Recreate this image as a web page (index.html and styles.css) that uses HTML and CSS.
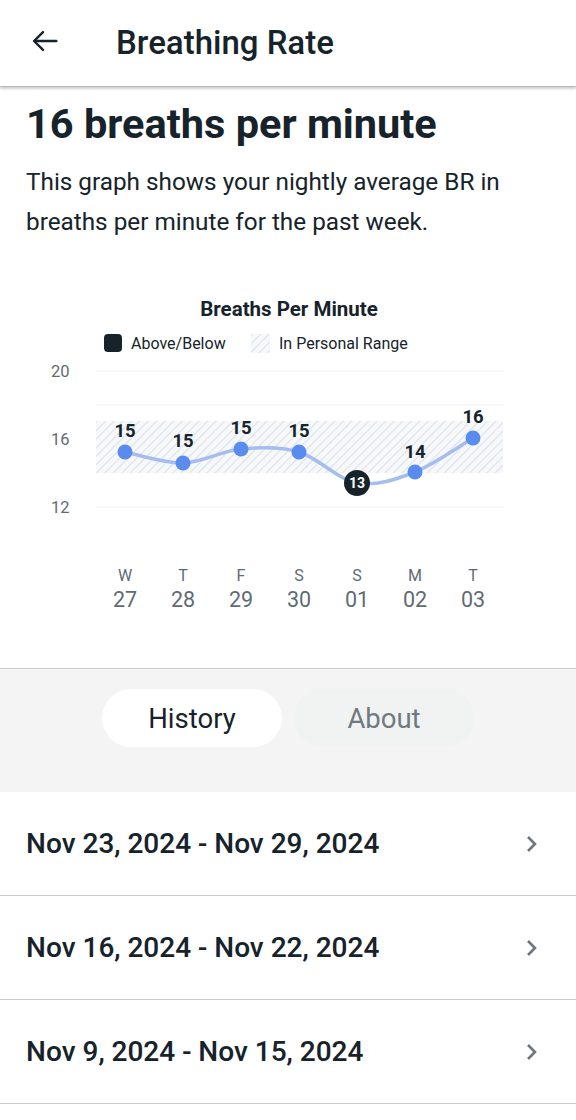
FILE: index.html
```html
<!DOCTYPE html>
<html lang="en">
<head>
<meta charset="utf-8">
<title>Breathing Rate</title>
<link rel="stylesheet" href="styles.css">
</head>
<body>
<header class="topbar">
  <svg class="back" width="32" height="32" viewBox="0 0 24 24" aria-hidden="true">
    <path d="M20.5 12H3.8M10.5 5.3L3.8 12L10.5 18.7" fill="none" stroke="#16232b" stroke-width="1.8" stroke-linecap="round" stroke-linejoin="round"/>
  </svg>
  <h1 class="title">Breathing Rate</h1>
</header>

<main>
  <section class="summary">
    <h2 class="headline">16 breaths per minute</h2>
    <p class="desc">This graph shows your nightly average BR in breaths per minute for the past week.</p>
  </section>

  <section class="chart">
    <svg class="chart-svg" width="576" height="426" viewBox="0 242 576 426">
      <defs>
        <pattern id="hatch" width="6" height="6" patternUnits="userSpaceOnUse" patternTransform="rotate(45)">
          <rect width="6" height="6" fill="#f6f8fa"/>
          <line x1="0" y1="0" x2="0" y2="6" stroke="#dbe2ea" stroke-width="2.2"/>
        </pattern>
      </defs>
      <text class="c-title" x="289" y="316" text-anchor="middle">Breaths Per Minute</text>
      <rect x="104" y="334" width="18" height="18" rx="4" fill="#16232b"/>
      <text class="c-legend" x="131" y="348.5">Above/Below</text>
      <rect x="251" y="334" width="19" height="19" fill="url(#hatch)"/>
      <text class="c-legend" x="279" y="348.5">In Personal Range</text>

      <text class="c-axis" x="51" y="377">20</text>
      <text class="c-axis" x="51" y="445">16</text>
      <text class="c-axis" x="51" y="513">12</text>

      <line x1="96" y1="371" x2="503" y2="371" class="grid"/>
      <line x1="96" y1="405" x2="503" y2="405" class="grid"/>
      <rect x="96" y="421" width="407" height="52" fill="url(#hatch)"/>
      <line x1="96" y1="507" x2="503" y2="507" class="grid"/>

      <path d="M125 452 C134.7 453.8 163.7 463.5 183 463 C202.3 462.5 221.7 450.8 241 449 C260.3 447.2 279.7 446.3 299 452 C318.3 457.7 337.7 479.7 357 483 C376.3 486.3 395.7 479.5 415 472 C434.3 464.5 463.3 443.7 473 438" fill="none" stroke="#a7bdf0" stroke-width="3.5" stroke-linecap="round"/>

      <circle cx="125" cy="452" r="7.5" class="pt"/>
      <circle cx="183" cy="463" r="7.5" class="pt"/>
      <circle cx="241" cy="449" r="7.5" class="pt"/>
      <circle cx="299" cy="452" r="7.5" class="pt"/>
      <circle cx="415" cy="472" r="7.5" class="pt"/>
      <circle cx="473" cy="438" r="7.5" class="pt"/>
      <circle cx="357" cy="483" r="13" fill="#16232b"/>

      <text class="c-val" x="125" y="437" text-anchor="middle">15</text>
      <text class="c-val" x="183" y="447" text-anchor="middle">15</text>
      <text class="c-val" x="241" y="434" text-anchor="middle">15</text>
      <text class="c-val" x="299" y="437" text-anchor="middle">15</text>
      <text class="c-val" x="415" y="458" text-anchor="middle">14</text>
      <text class="c-val" x="473" y="423" text-anchor="middle">16</text>
      <text class="c-val13" x="357" y="488" text-anchor="middle">13</text>

      <g class="c-day" text-anchor="middle">
        <text x="125" y="581">W</text>
        <text x="183" y="581">T</text>
        <text x="241" y="581">F</text>
        <text x="299" y="581">S</text>
        <text x="357" y="581">S</text>
        <text x="415" y="581">M</text>
        <text x="473" y="581">T</text>
      </g>
      <g class="c-date" text-anchor="middle">
        <text x="125" y="607">27</text>
        <text x="183" y="607">28</text>
        <text x="241" y="607">29</text>
        <text x="299" y="607">30</text>
        <text x="357" y="607">01</text>
        <text x="415" y="607">02</text>
        <text x="473" y="607">03</text>
      </g>
    </svg>
  </section>

  <section class="tabs">
    <button class="tab tab-active">History</button>
    <button class="tab">About</button>
  </section>

  <ul class="history">
    <li class="row"><span>Nov 23, 2024 - Nov 29, 2024</span><svg class="chev" width="16" height="20" viewBox="0 0 16 20"><path d="M4 3L11 10L4 17" fill="none" stroke="#6f777c" stroke-width="2.6"/></svg></li>
    <li class="row"><span>Nov 16, 2024 - Nov 22, 2024</span><svg class="chev" width="16" height="20" viewBox="0 0 16 20"><path d="M4 3L11 10L4 17" fill="none" stroke="#6f777c" stroke-width="2.6"/></svg></li>
    <li class="row"><span>Nov 9, 2024 - Nov 15, 2024</span><svg class="chev" width="16" height="20" viewBox="0 0 16 20"><path d="M4 3L11 10L4 17" fill="none" stroke="#6f777c" stroke-width="2.6"/></svg></li>
  </ul>
</main>
</body>
</html>
```

FILE: styles.css
```css
* { box-sizing: border-box; }
html, body {
  margin: 0;
  padding: 0;
  background: #ffffff;
  font-family: Roboto, "Liberation Sans", sans-serif;
  color: #16232b;
  overflow: hidden;
}
.topbar {
  height: 86px;
  display: flex;
  align-items: center;
  padding-left: 29px;
  background: #fff;
  box-shadow: 0 1px 0 #b5b9bb, 0 3px 2px rgba(0,0,0,0.18);
  position: relative;
  z-index: 1;
}
.back { display: block; margin-top: -4px; }
.title {
  margin: -2px 0 0 55px;
  font-family: "Roboto Medium", Roboto, "Liberation Sans", sans-serif;
  font-size: 33px;
  font-weight: 500;
  line-height: 1;
}
.summary { padding: 15px 26px 0; }
.headline {
  margin: 0;
  font-size: 41.5px;
  font-weight: 700;
  line-height: 46px;
}
.desc {
  margin: 15px 0 0;
  font-size: 24.3px;
  line-height: 40px;
}
.chart-svg { display: block; }
.c-title { font-size: 20.5px; font-weight: 700; fill: #16232b; }
.c-legend { font-size: 16px; fill: #16232b; }
.c-axis { font-size: 16.5px; fill: #5f6b73; }
.grid { stroke: #eef1f3; stroke-width: 1; }
.pt { fill: #5a8bee; }
.c-val { font-size: 18.5px; font-weight: 700; fill: #16232b; }
.c-val13 { font-size: 14px; font-weight: 700; fill: #ffffff; }
.c-day { font-size: 16px; fill: #5f6b73; }
.c-date { font-size: 21.5px; fill: #5f6b73; }
.tabs {
  border-top: 1px solid #c9cdd0;
  background: #f4f4f4;
  height: 124px;
  display: flex;
  justify-content: center;
  gap: 12px;
  padding-top: 20px;
}
.tab {
  width: 180px;
  height: 58px;
  border: none;
  border-radius: 29px;
  background: #f1f2f2;
  font-family: Roboto, "Liberation Sans", sans-serif;
  font-size: 27.5px;
  color: #6f7a80;
  padding: 0;
}
.tab-active { background: #ffffff; color: #16232b; }
.history { list-style: none; margin: 0; padding: 0; }
.row {
  height: 104px;
  display: flex;
  align-items: center;
  justify-content: space-between;
  padding: 0 36px 0 26px;
  border-bottom: 1.5px solid #c9cdd0;
  font-family: "Roboto Medium", Roboto, "Liberation Sans", sans-serif;
  font-size: 28px;
  font-weight: 500;
}
.chev { display: block; }
```
